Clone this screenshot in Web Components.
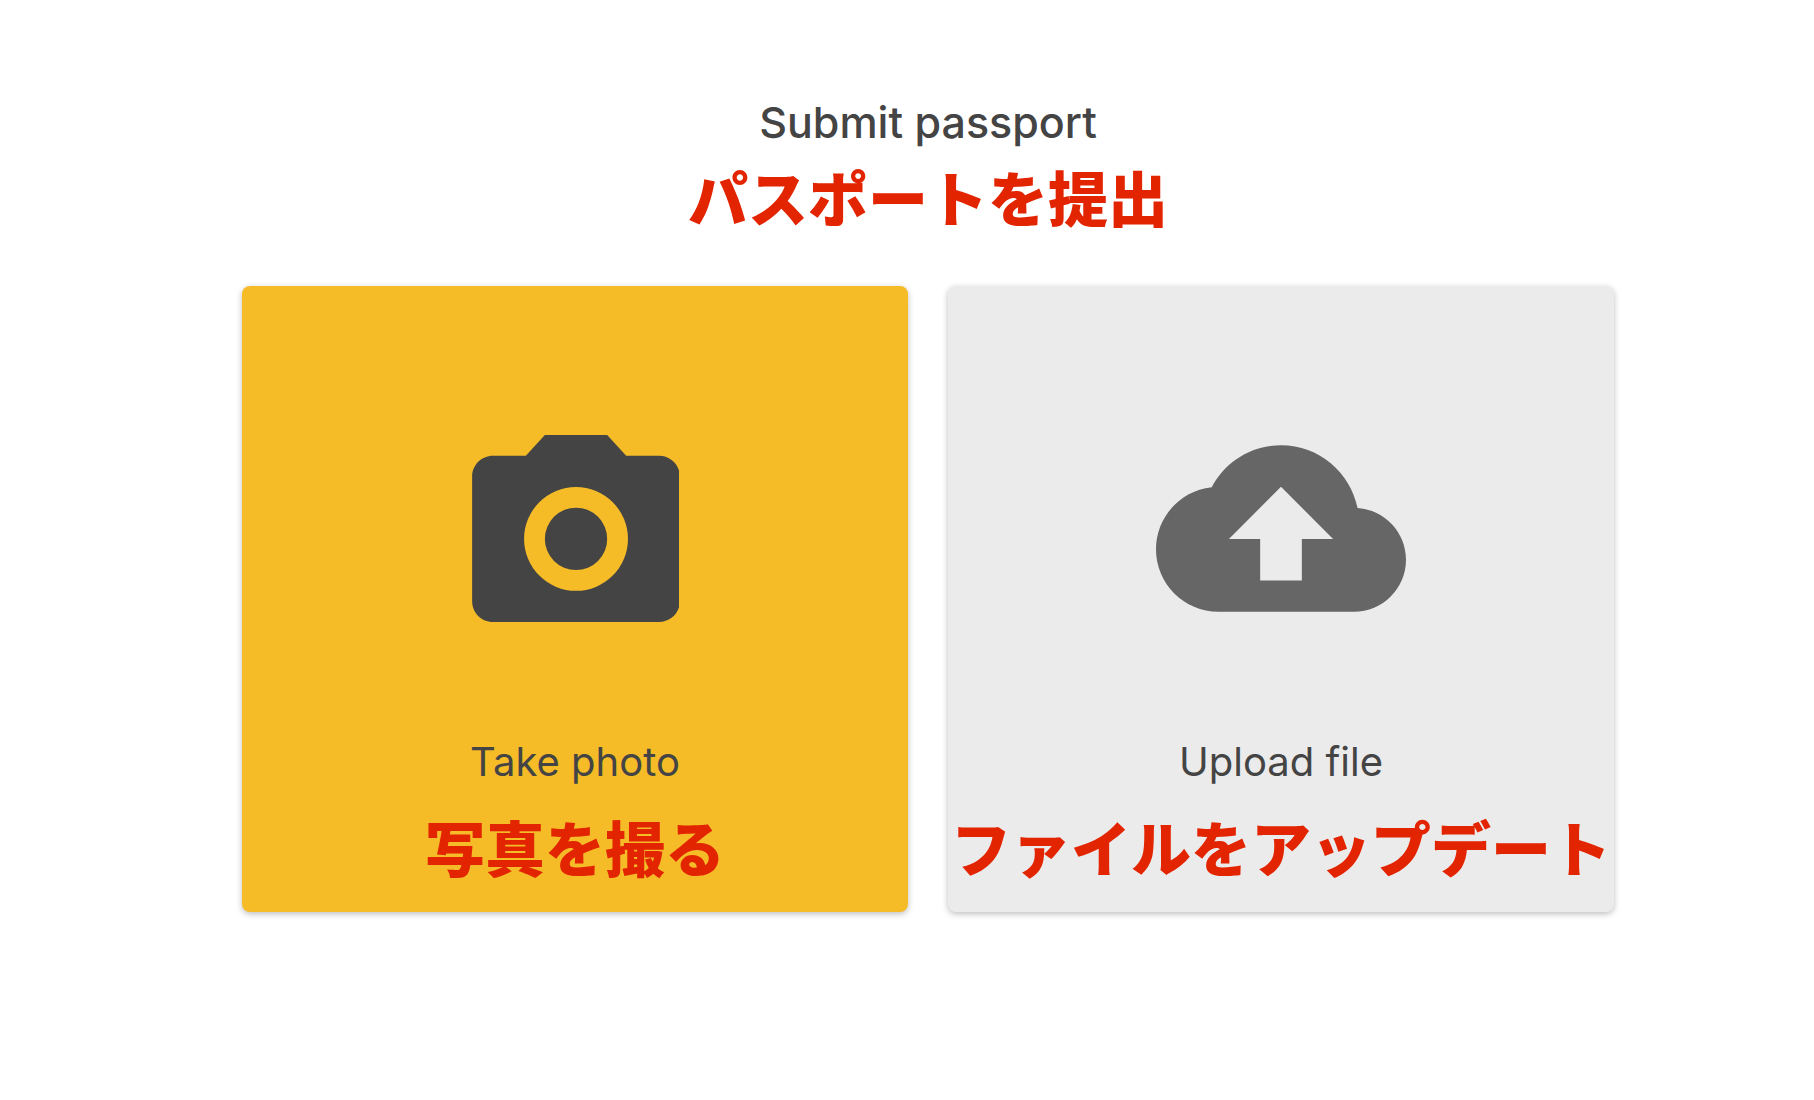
<!DOCTYPE html>
<html lang="en">
<head>
<meta charset="utf-8">
<title>Submit passport</title>
<style>
  body { margin: 0; background: #fff; color: #444; font-family: Inter, "Noto Sans CJK JP", sans-serif; }
</style>
</head>
<body>
<passport-page>
  <jp-note slot="note">パスポートを提出</jp-note>
  <choice-card tone="primary">
    <camera-icon slot="icon"></camera-icon>
    Take photo
    <jp-note slot="note">写真を撮る</jp-note>
  </choice-card>
  <choice-card>
    <cloud-icon slot="icon"></cloud-icon>
    Upload file
    <jp-note slot="note">ファイルをアップデート</jp-note>
  </choice-card>
</passport-page>
<script>
const define = (name, html) => customElements.define(name, class extends HTMLElement {
  constructor() {
    super();
    this.attachShadow({ mode: "open" }).innerHTML = html;
  }
});

define("jp-note", `
  <style>
    :host { display: block; color: #e32400; font: 900 60px/72px "Noto Sans CJK JP", sans-serif; white-space: nowrap; }
  </style>
  <span lang="ja"><slot></slot></span>`);

define("camera-icon", `
  <style>:host, svg { display: block; }</style>
  <svg width="207" height="187" viewBox="2 2 19.9 18" aria-hidden="true">
    <path fill="#444" fill-rule="evenodd" d="M9 2 7.17 4H4c-1.1 0-2 .9-2 2v12c0 1.1.9 2 2 2h16c1.1 0 2-.9 2-2V6c0-1.1-.9-2-2-2h-3.17L15 2H9Zm3 5a5 5 0 1 1 0 10 5 5 0 0 1 0-10Z"/>
    <circle cx="12" cy="12" r="3" fill="#444"/>
  </svg>`);

define("cloud-icon", `
  <style>:host, svg { display: block; }</style>
  <svg width="250" height="167" viewBox="0 4 24 16" aria-hidden="true">
    <path fill="#666" d="M19.35 10.04C18.67 6.59 15.64 4 12 4 9.11 4 6.6 5.64 5.35 8.04 2.34 8.36 0 10.91 0 14c0 3.31 2.69 6 6 6h13c2.76 0 5-2.24 5-5 0-2.64-2.05-4.78-4.65-4.96ZM14 13v4h-4v-4H7l5-5 5 5h-3Z"/>
  </svg>`);

define("choice-card", `
  <style>
    :host { display: block; flex: 1 1 0; min-width: 0; }
    button {
      display: flex; flex-direction: column; align-items: center;
      box-sizing: border-box; width: 100%; margin: 0; padding: 142px 0 30px;
      border: 0; border-radius: 8px; background: #ebebeb; color: inherit;
      box-shadow: 0 2px 6px rgba(0, 0, 0, .26); font: 400 40px/56px Inter, sans-serif; cursor: pointer;
    }
    :host([tone="primary"]) button { background: #f5bc28; }
    .icon { display: flex; align-items: center; height: 200px; margin-bottom: 106px; }
    .label { margin-bottom: 20px; }
  </style>
  <button type="button">
    <span class="icon"><slot name="icon"></slot></span>
    <span class="label"><slot></slot></span>
    <slot name="note"></slot>
  </button>`);

define("passport-page", `
  <style>
    :host { display: block; padding: 90px 200px 90px 242px; }
    header { display: flex; flex-direction: column; align-items: center; gap: 6px; margin-bottom: 54px; }
    h1 { margin: 0; font: 500 43px/64px Inter, sans-serif; }
    .choices { display: flex; gap: 40px; }
  </style>
  <main>
    <header><h1>Submit passport</h1><slot name="note"></slot></header>
    <div class="choices"><slot></slot></div>
  </main>`);
</script>
</body>
</html>
